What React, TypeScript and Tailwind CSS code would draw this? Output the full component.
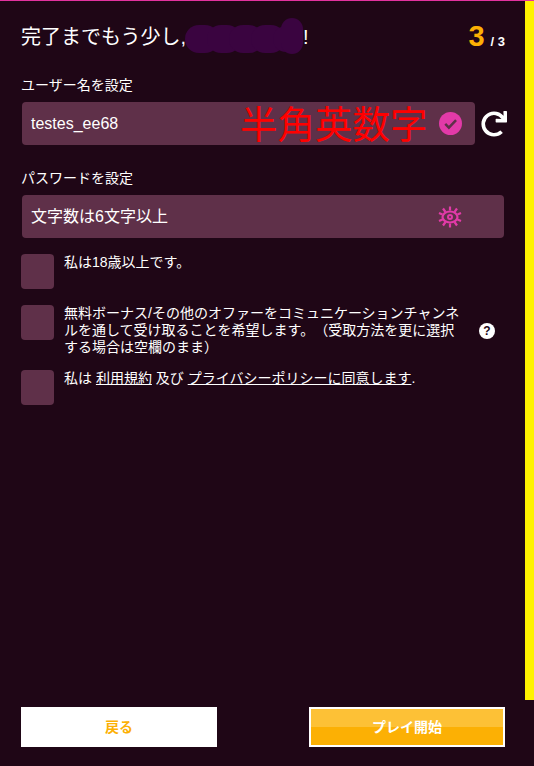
import React from 'react';
import { FaRedo } from 'react-icons/fa';

const font = { fontFamily: '"Liberation Sans", "Noto Sans CJK JP", sans-serif' };

function CheckRow({ children, className = '' }: { children: React.ReactNode; className?: string }) {
  return (
    <div className={`flex gap-[10px] ${className}`}>
      <div className="h-[35px] w-[33px] shrink-0 rounded-[4px] bg-[#5f3049]" />
      <div className="w-[400px] text-[14px] leading-[17px] text-white [text-spacing-trim:space-all]">{children}</div>
    </div>
  );
}

function EyeIcon() {
  // eye with lashes all round, password toggle
  return (
    <svg viewBox="0 0 24 24" className="h-[24px] w-[24px]" fill="none" stroke="#e23aa8">
      <ellipse cx="12" cy="12" rx="7.5" ry="5.5" strokeWidth="2.2" />
      <circle cx="12" cy="12" r="2" strokeWidth="2" />
      <path
        strokeWidth="2.2"
        d="M12 1.5v4M12 18.5v4M5 3.5l2.5 3.5M19 3.5L16.5 7M5 20.5L7.5 17M19 20.5L16.5 17M1 8l3.5 1.5M23 8l-3.5 1.5M1 16l3.5-1.5M23 16l-3.5-1.5"
      />
    </svg>
  );
}

export default function App() {
  return (
    <div className="flex h-[766px] w-[534px] flex-col overflow-hidden bg-[#1f0616]" style={font}>
      <div className="h-px w-full shrink-0 bg-[#e2329f]" />
      <div className="flex min-h-0 flex-1">
        <main className="flex w-[525px] flex-col pl-[21px] pr-[20px]">
          {/* header */}
          <div className="flex h-[50px] items-end justify-between">
            <div className="flex text-[20px] leading-[28px] text-white">
              <span>完了までもう少し,</span>
              <span className="relative block w-[117px]">
                <span className="absolute -left-[1px] top-[1px] flex items-center">
                  <span className="h-[28px] w-[34px] shrink-0 rounded-full bg-[#3a0440]" />
                  <span className="-ml-[12px] h-[28px] w-[34px] shrink-0 rounded-full bg-[#3a0440]" />
                  <span className="-ml-[12px] h-[28px] w-[34px] shrink-0 rounded-full bg-[#3a0440]" />
                  <span className="-ml-[12px] h-[28px] w-[34px] shrink-0 rounded-full bg-[#3a0440]" />
                  <span className="-ml-[12px] h-[26px] w-[30px] shrink-0 rounded-full bg-[#3a0440]" />
                  <span className="-ml-[22px] -mt-[6px] h-[36px] w-[22px] shrink-0 rounded-full bg-[#3a0440]" />
                </span>
              </span>
              <span>!</span>
            </div>
            <div className="flex items-baseline gap-[6px] font-bold text-white">
              <span className="text-[29px] leading-[30px] text-[#fcb004]">3</span>
              <span className="text-[13px]">/ 3</span>
            </div>
          </div>

          {/* username */}
          <div className="mt-[24px] text-[14px] leading-[20px] text-white">ユーザー名を設定</div>
          <div className="mt-[7px] flex items-center">
            <div className="relative ml-px flex h-[43px] w-[453px] shrink-0 items-center justify-end rounded-[4px] bg-[#5f3049] pl-[9px] pr-[13px]">
              <span className="mr-auto text-[16px] text-white">testes_ee68</span>
              <span className="absolute left-[218px] top-[0px] text-[37.5px] leading-[46px] text-[#ff0000]">半角英数字</span>
              <svg viewBox="0 0 24 24" className="h-[23px] w-[23px]">
                <circle cx="12" cy="12" r="12" fill="#e23aa8" />
                <path d="M6.5 12.5l3.8 3.8 7.5-7.8" fill="none" stroke="#5f3049" strokeWidth="2.6" />
              </svg>
            </div>
            <FaRedo className="ml-[6px] h-[26px] w-[26px] shrink-0 text-white" />
          </div>

          {/* password */}
          <div className="mt-[23px] text-[14px] leading-[20px] text-white">パスワードを設定</div>
          <div className="mt-[7px] ml-px flex h-[43px] w-[482px] items-center rounded-[4px] bg-[#5f3049] pl-[9px] pr-[42px]">
            <span className="mr-auto text-[16px] text-white">文字数は6文字以上</span>
            <EyeIcon />
          </div>

          {/* checkboxes */}
          <CheckRow className="mt-[16px]">私は18歳以上です。</CheckRow>
          <div className="mt-[16px] flex items-center">
            <CheckRow className="self-start">
              無料ボーナス/その他のオファーをコミュニケーションチャンネルを通して受け取ることを希望します。（受取方法を更に選択する場合は空欄のまま）
            </CheckRow>
            <span className="ml-[15px] flex h-[16px] w-[16px] items-center justify-center rounded-full bg-white text-[12px] font-bold leading-none text-[#1f0616]">
              ?
            </span>
          </div>
          <CheckRow className="mt-[14px]">
            私は <a className="underline">利用規約</a> 及び <a className="underline">プライバシーポリシーに同意します</a>.
          </CheckRow>

          {/* footer buttons */}
          <div className="mt-auto flex justify-between pb-[19px] pr-0">
            <button className="h-[40px] w-[196px] bg-white text-[14px] font-bold text-[#fcb004]">戻る</button>
            <button className="h-[40px] w-[196px] border-2 border-white bg-[linear-gradient(#fdc136_50%,#fcb004_50%)] text-[14px] font-bold text-white">
              プレイ開始
            </button>
          </div>
        </main>
        <aside className="h-[699px] w-[9px] shrink-0 bg-[#fff200]" />
      </div>
    </div>
  );
}
